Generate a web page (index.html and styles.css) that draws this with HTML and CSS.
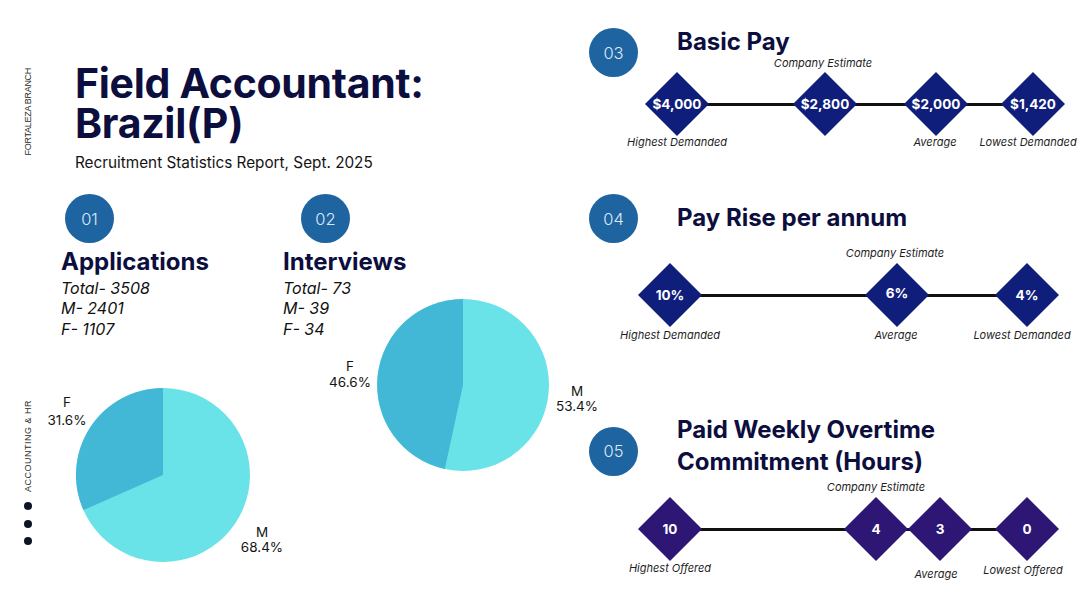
FILE: index.html
```html
<!DOCTYPE html>
<html lang="en">
<head>
<meta charset="utf-8">
<title>Field Accountant: Brazil(P)</title>
<link rel="stylesheet" href="styles.css">
</head>
<body>
<div class="page">
  <aside class="rail">
    <span class="rail-text branch">FORTALEZA BRANCH</span>
    <span class="rail-text dept">ACCOUNTING &amp; HR</span>
    <div class="dots"><i></i><i></i><i></i></div>
  </aside>

  <main class="left">
    <header class="hero">
      <h1><span class="h1-line">Field Accountant:</span><span class="h1-line">Brazil(P)</span></h1>
      <p class="sub">Recruitment Statistics Report, Sept. 2025</p>
    </header>

    <div class="stats">
      <section class="stat stat-apps">
        <div class="badge">01</div>
        <h2 class="stat-title">Applications</h2>
        <ul class="figures">
          <li>Total- 3508</li>
          <li>M- 2401</li>
          <li>F- 1107</li>
        </ul>
        <svg class="pie pie-apps" width="250" height="190" viewBox="0 0 250 190">
          <circle cx="123" cy="96" r="87" class="slice-m"/>
          <path d="M123 96 L123 9 A87 87 0 0 0 43.4 131.1 Z" class="slice-f"/>
          <text x="27" y="28" class="pie-label">F</text>
          <text x="27" y="46" class="pie-label">31.6%</text>
          <text x="222" y="158" class="pie-label">M</text>
          <text x="222" y="173" class="pie-label">68.4%</text>
        </svg>
      </section>

      <section class="stat stat-int">
        <div class="badge">02</div>
        <h2 class="stat-title">Interviews</h2>
        <div class="stack">
          <ul class="figures">
            <li>Total- 73</li>
            <li>M- 39</li>
            <li>F- 34</li>
          </ul>
          <svg class="pie pie-int" width="280" height="185" viewBox="0 0 280 185">
            <circle cx="143" cy="92" r="86" class="slice-m"/>
            <path d="M143 92 L143 6 A86 86 0 0 0 124.8 176 Z" class="slice-f"/>
            <text x="30" y="78" class="pie-label">F</text>
            <text x="30" y="94" class="pie-label">46.6%</text>
            <text x="257" y="103" class="pie-label">M</text>
            <text x="257" y="118" class="pie-label">53.4%</text>
          </svg>
        </div>
      </section>
    </div>
  </main>

  <div class="right">
    <section class="metric m-pay">
      <div class="metric-head">
        <div class="badge">03</div>
        <h2 class="metric-title">Basic Pay</h2>
      </div>
      <div class="timeline tl-pay">
        <div class="tl-line" style="left:88px;width:356px;top:26px"></div>
        <div class="node" style="left:88px;top:27px">$4,000</div>
        <div class="node" style="left:236px;top:27px">$2,800</div>
        <div class="node" style="left:347px;top:27px">$2,000</div>
        <div class="node" style="left:444px;top:27px">$1,420</div>
        <span class="tl-label" style="left:234px;top:-14px">Company Estimate</span>
        <span class="tl-label" style="left:88px;top:65px">Highest Demanded</span>
        <span class="tl-label" style="left:346px;top:65px">Average</span>
        <span class="tl-label" style="left:439px;top:65px">Lowest Demanded</span>
      </div>
    </section>

    <section class="metric m-rise">
      <div class="metric-head">
        <div class="badge">04</div>
        <h2 class="metric-title">Pay Rise per annum</h2>
      </div>
      <div class="timeline tl-rise">
        <div class="tl-line" style="left:81px;width:357px;top:51px"></div>
        <div class="node" style="left:81px;top:52px">10%</div>
        <div class="node node-up" style="left:308px;top:52px">6%</div>
        <div class="node" style="left:438px;top:52px">4%</div>
        <span class="tl-label" style="left:306px;top:10px">Company Estimate</span>
        <span class="tl-label" style="left:81px;top:92px">Highest Demanded</span>
        <span class="tl-label" style="left:307px;top:92px">Average</span>
        <span class="tl-label" style="left:433px;top:92px">Lowest Demanded</span>
      </div>
    </section>

    <section class="metric m-ot">
      <div class="metric-head">
        <div class="badge">05</div>
        <h2 class="metric-title">Paid Weekly Overtime<br>Commitment (Hours)</h2>
      </div>
      <div class="timeline tl-ot">
        <div class="tl-line" style="left:81px;width:357px;top:50px"></div>
        <div class="node node-purple" style="left:81px;top:51px">10</div>
        <div class="node node-purple" style="left:287px;top:51px">4</div>
        <div class="node node-purple" style="left:351px;top:51px">3</div>
        <div class="node node-purple" style="left:438px;top:51px">0</div>
        <span class="tl-label" style="left:287px;top:9px">Company Estimate</span>
        <span class="tl-label" style="left:81px;top:90px">Highest Offered</span>
        <span class="tl-label" style="left:347px;top:96px">Average</span>
        <span class="tl-label" style="left:434px;top:92px">Lowest Offered</span>
      </div>
    </section>
  </div>
</div>
</body>
</html>
```

FILE: styles.css
```css
* { box-sizing: border-box; }

body {
  margin: 0;
  background: #ffffff;
  font-family: Inter, "Liberation Sans", sans-serif;
  color: #111111;
}

.page {
  width: 1080px;
  height: 607px;
  overflow: hidden;
  display: grid;
  grid-template-columns: 56px 524px 500px;
  background: #ffffff;
}

/* ---------- side rail ---------- */
.rail {
  display: flex;
  flex-direction: column;
  align-items: center;
  padding-top: 68px;
}

.rail-text {
  writing-mode: vertical-rl;
  transform: rotate(180deg);
  font-family: "Liberation Sans", Arial, sans-serif;
  font-size: 9px;
  line-height: 10px;
  letter-spacing: -0.3px;
  color: #2a2a2a;
  white-space: nowrap;
}

.dept {
  margin-top: 245px;
  letter-spacing: 0.5px;
}

.dots {
  display: flex;
  flex-direction: column;
  gap: 9.5px;
  margin-top: 10px;
}

.dots i {
  display: block;
  width: 8px;
  height: 8px;
  border-radius: 50%;
  background: #0c1426;
}

/* ---------- left column ---------- */
.hero { padding: 63px 0 0 19px; }

.hero h1 {
  margin: 0;
  font-size: 41px;
  font-weight: 700;
  color: #0c0e3e;
  letter-spacing: -0.3px;
}

.h1-line {
  display: block;
  height: 40px;
  line-height: 40px;
}

.sub {
  margin: 10px 0 0;
  font-size: 15.3px;
  line-height: 20px;
  color: #141414;
}

.stats {
  display: grid;
  grid-template-columns: 222px 1fr;
  padding-left: 5px;
  margin-top: 21px;
}

.badge {
  width: 49px;
  height: 49px;
  border-radius: 50%;
  background: #1e64a0;
  color: #dfe9f4;
  font-size: 16.5px;
  font-weight: 300;
  display: flex;
  align-items: center;
  justify-content: center;
  flex: none;
}

.stat-apps .badge { margin-left: 4px; }
.stat-int .badge { margin-left: 18px; }

.stat-title {
  margin: 5px 0 0;
  font-size: 24px;
  line-height: 28px;
  font-weight: 700;
  color: #0c0e3e;
}

.figures {
  list-style: none;
  margin: 1.5px 0 0;
  padding: 0;
  font-size: 16px;
  line-height: 20.5px;
  font-style: italic;
  color: #111111;
}

.pie { display: block; overflow: visible; }

.pie-apps {
  margin-left: -21px;
  margin-top: 40px;
}

.stack { display: grid; }
.stack > * { grid-area: 1 / 1; }

.pie-int {
  margin-left: 37px;
  margin-top: 17px;
}

.slice-m { fill: #69e3e8; }
.slice-f { fill: #42b8d6; }

.pie-label {
  font-family: Inter, "Liberation Sans", sans-serif;
  font-size: 13.5px;
  fill: #141414;
  text-anchor: middle;
}

/* ---------- right column ---------- */
.right {
  padding: 28px 0 0 9px;
}

.metric-head {
  display: flex;
  align-items: flex-start;
  gap: 39px;
}

.metric-title {
  margin: 0;
  font-size: 24px;
  line-height: 28px;
  font-weight: 700;
  color: #0c0e3e;
}

.m-rise { margin-top: 42px; }
.m-rise .metric-title { margin-top: 10px; }

.m-ot { margin-top: 61px; }
.m-ot .metric-title { line-height: 32px; }
.m-ot .badge { margin-top: 12.5px; }

.timeline { position: relative; }
.tl-pay { height: 75px; }
.tl-rise { height: 110px; }
.tl-ot { height: 110px; }

.tl-line {
  position: absolute;
  height: 2.5px;
  background: #111111;
}

.node {
  position: absolute;
  width: 64px;
  height: 64px;
  transform: translate(-50%, -50%);
  clip-path: polygon(50% 0, 100% 50%, 50% 100%, 0 50%);
  background: #0f1e7b;
  color: #ffffff;
  font-size: 13.5px;
  font-weight: 700;
  display: flex;
  align-items: center;
  justify-content: center;
}

.node-up { padding-bottom: 4px; }
.node-purple { background: #2d1674; }

.tl-label {
  position: absolute;
  transform: translate(-50%, -50%);
  font-size: 11px;
  line-height: 14px;
  font-style: italic;
  color: #1e1e1e;
  white-space: nowrap;
}
```
